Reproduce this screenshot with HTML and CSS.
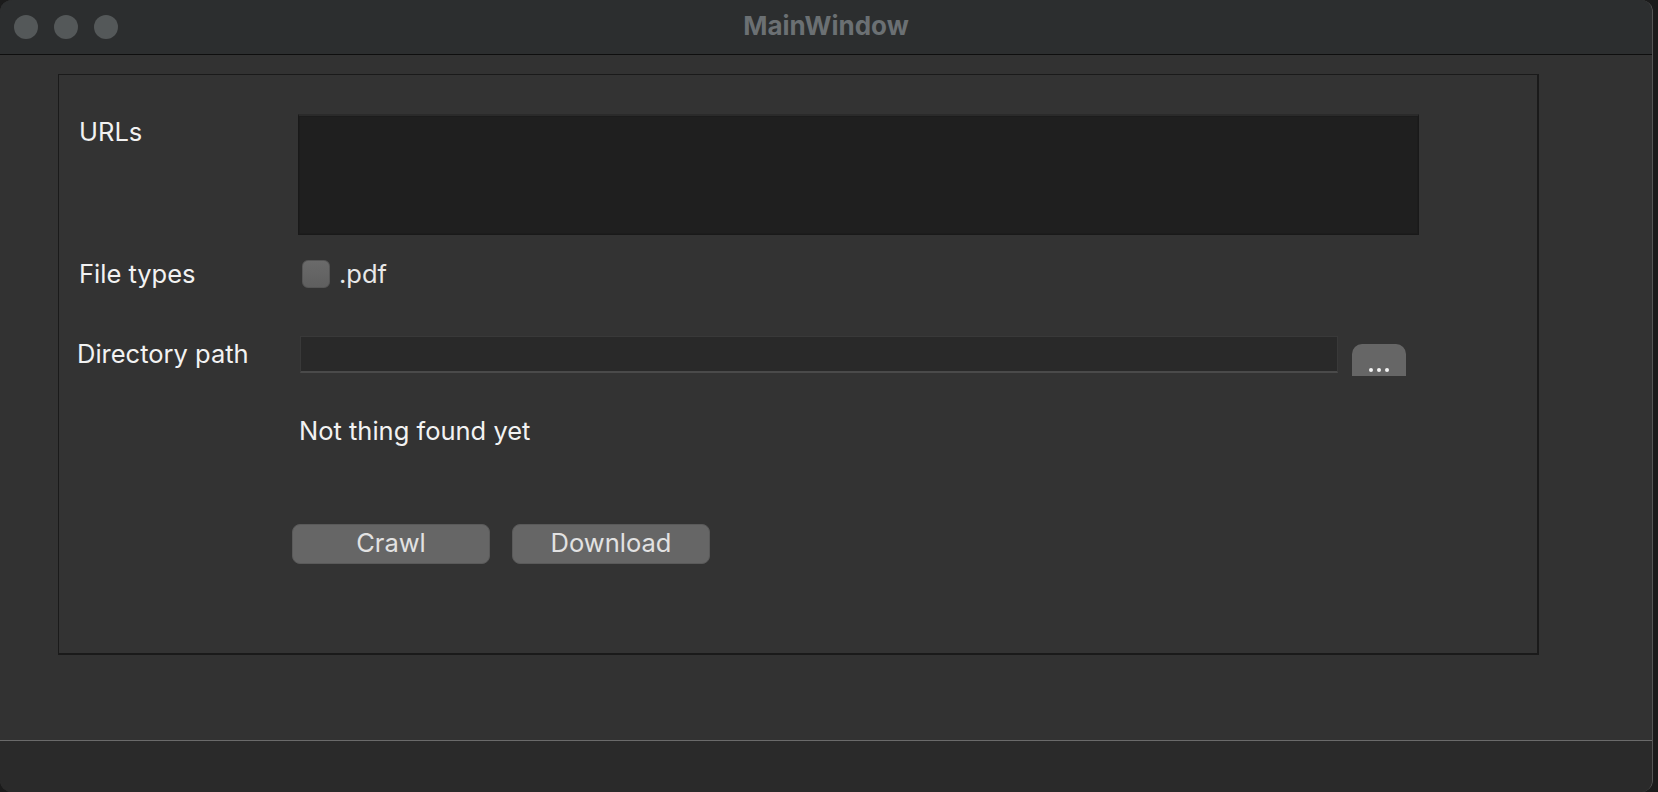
FILE: index.html
```html
<!DOCTYPE html>
<html>
<head>
<meta charset="utf-8">
<link rel="stylesheet" href="styles.css">
</head>
<body>
<div class="window">
  <div class="titlebar">
    <div class="lights">
      <span class="light"></span><span class="light"></span><span class="light"></span>
    </div>
    <div class="title">MainWindow</div>
  </div>
  <div class="content">
    <div class="group">
      <div class="row row-urls">
        <div class="label label-top">URLs</div>
        <div class="textarea"></div>
      </div>
      <div class="row row-types">
        <div class="label">File types</div>
        <label class="check"><span class="box"></span><span class="check-text">.pdf</span></label>
      </div>
      <div class="row row-dir">
        <div class="label label-dir">Directory path</div>
        <div class="input"></div>
        <div class="browse"><span class="dot"></span><span class="dot"></span><span class="dot"></span></div>
      </div>
      <div class="status">Not thing found yet</div>
      <div class="buttons">
        <div class="btn">Crawl</div>
        <div class="btn">Download</div>
      </div>
    </div>
  </div>
  <div class="statusbar"></div>
</div>
</body>
</html>
```
FILE: styles.css
```css
html, body {
  margin: 0;
  padding: 0;
  background: #1b1b1b;
  font-family: Inter, "Liberation Sans", sans-serif;
}
.window {
  width: 1653px;
  height: 792px;
  display: flex;
  flex-direction: column;
  border-radius: 12px;
  overflow: hidden;
  box-sizing: border-box;
  border-right: 1px solid #555;
  background: #323232;
}
.titlebar {
  height: 54px;
  background: #2c2e2f;
  border-bottom: 1px solid #0e0e0e;
  display: flex;
  align-items: center;
  position: relative;
  flex-shrink: 0;
}
.lights {
  display: flex;
  gap: 16px;
  padding-left: 14px;
}
.light {
  width: 24px;
  height: 24px;
  border-radius: 50%;
  background: #545859;
}
.title {
  position: absolute;
  left: 0;
  right: 0;
  text-align: center;
  font-weight: 700;
  font-size: 26px;
  color: #6b7073;
  top: 10px;
}
.content {
  flex: 1;
  background: #323232;
  padding: 19px 0 0 58px;
}
.group {
  width: 1481px;
  height: 581px;
  box-sizing: border-box;
  border: 1px solid #1a1a1a;
  border-right-width: 2px;
  border-bottom-width: 2px;
  background: #333333;
  display: flex;
  flex-direction: column;
}
.row {
  display: flex;
  align-items: center;
}
.label {
  width: 219px;
  padding-left: 20px;
  color: #f2f2f2;
  font-size: 25.5px;
  line-height: 26px;
  flex-shrink: 0;
}
.row-urls {
  margin-top: 39px;
  align-items: flex-start;
}
.label-top {
  margin-top: 5px;
}
.textarea {
  width: 1121px;
  height: 121px;
  box-sizing: border-box;
  background: #1f1f1f;
  border: 1px solid #191919;
  border-top: 2px solid #2a2a2a;
  box-shadow: inset 0 0 0 1px #1c1c1c;
}
.row-types {
  margin-top: 25px;
  height: 28px;
}
.check {
  display: flex;
  align-items: center;
  margin-left: 4px;
}
.box {
  width: 28px;
  height: 28px;
  border-radius: 6px;
  background: linear-gradient(#6a6a6a, #5f5f5f);
  box-sizing: border-box;
  border: 1px solid #555;
}
.check-text {
  margin-left: 9px;
  font-size: 25.5px;
  color: #e8e8e8;
  line-height: 26px;
}
.row-dir {
  margin-top: 48px;
  height: 37px;
  align-items: flex-start;
}
.label-dir {
  padding-left: 18px;
  width: 223px;
  margin-top: 5px;
}
.input {
  width: 1038px;
  height: 37px;
  box-sizing: border-box;
  background: #292929;
  border: 1px solid #393939;
  border-bottom: 2px solid #4a4a4a;
}
.browse {
  width: 54px;
  height: 32px;
  margin-left: 14px;
  margin-top: 8px;
  background: #666666;
  border-radius: 10px 10px 0 0;
  display: flex;
  justify-content: center;
  align-items: flex-end;
  gap: 4px;
  padding-bottom: 4px;
  box-sizing: border-box;
}
.dot {
  width: 4px;
  height: 4px;
  border-radius: 50%;
  background: #f4f4f4;
}
.status {
  margin-top: 45px;
  margin-left: 240px;
  color: #f2f2f2;
  font-size: 25.5px;
  line-height: 26px;
}
.buttons {
  display: flex;
  gap: 22px;
  margin-top: 80px;
  margin-left: 233px;
}
.btn {
  width: 198px;
  height: 40px;
  box-sizing: border-box;
  background: #666666;
  border-radius: 8px;
  border: 1px solid #5a5a5a;
  color: #e2e2e2;
  font-size: 25.5px;
  display: flex;
  align-items: center;
  justify-content: center;
  padding-bottom: 3px;
}
.statusbar {
  height: 51px;
  flex-shrink: 0;
  border-top: 1px solid #6a6a6a;
  background: #2a2a2a;
}
```
